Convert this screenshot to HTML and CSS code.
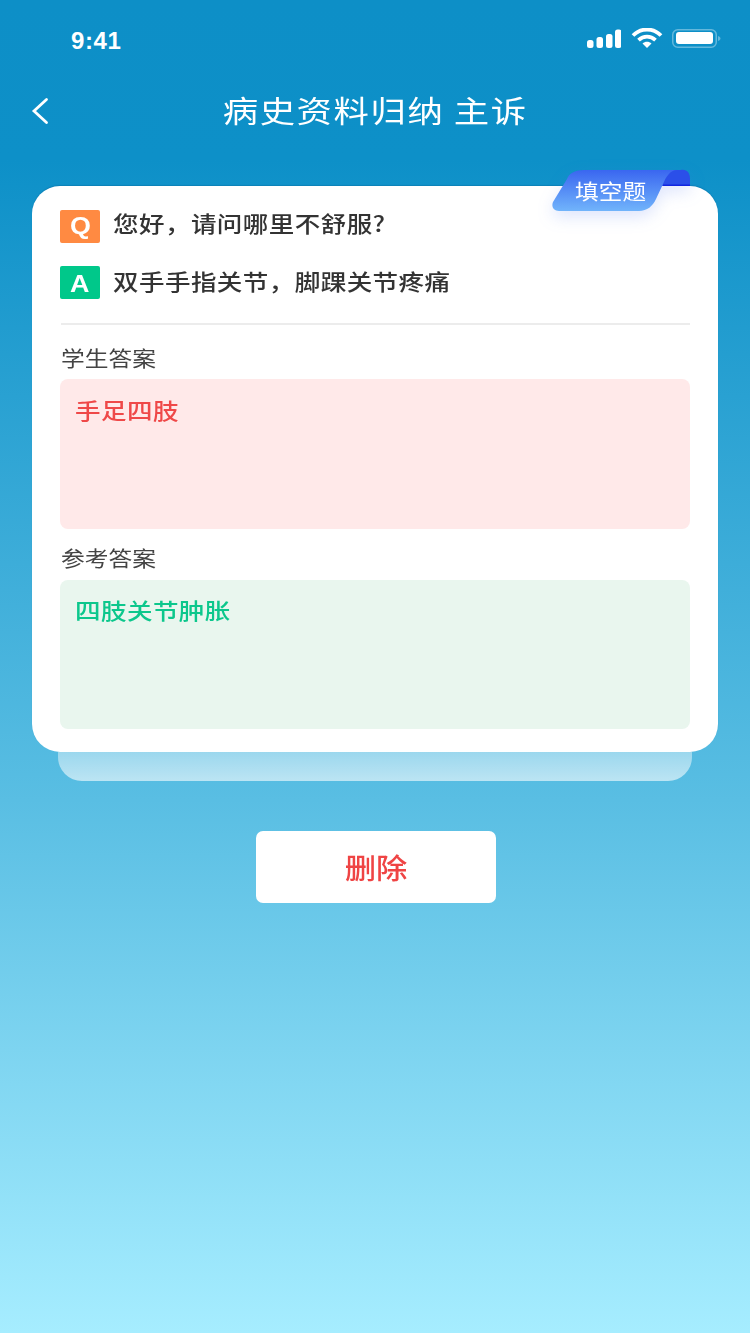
FILE: index.html
```html
<!DOCTYPE html>
<html lang="zh-CN">
<head>
<meta charset="utf-8">
<title>病史资料归纳 主诉</title>
<link rel="stylesheet" href="styles.css">
</head>
<body>
<div class="page">
  <div class="status">
    <span class="time">9:41</span>
    <div class="status-icons">
      <svg class="ic-signal" width="34.500" height="19" viewBox="0 0 34.500 19"><rect x="0" y="11" width="6.500" height="8" rx="2.500"/><rect x="9.500" y="8" width="6.500" height="11" rx="2.500"/><rect x="19" y="5" width="6.500" height="14" rx="2.500"/><rect x="28" y="0.500" width="6.500" height="18.500" rx="2.500"/></svg>
      <svg class="ic-wifi" width="32" height="20" viewBox="0 0 32 20"><path d="M2 7.500C10 -0.500 22 -0.500 30 7.500" /><path d="M7.500 12.200C12.500 7.500 19.500 7.500 24.500 12.200"/><path class="wifi-dot" d="M11.500 15.500C14 13.300 18 13.300 20.500 15.500L16 20Z"/></svg>
      <svg class="ic-batt" width="49" height="19" viewBox="0 0 49 19"><rect class="batt-shell" x="0.750" y="0.750" width="43.500" height="17.500" rx="5"/><rect class="batt-fill" x="4" y="3" width="37" height="12" rx="3"/><path class="batt-tip" d="M46 7c1.500 .4 2.500 1.300 2.500 2.500s-1 2.100-2.500 2.500z"/></svg>
    </div>
  </div>
  <header class="nav">
    <svg class="back" width="20" height="28" viewBox="0 0 20 28"><path d="M16.500 2.500 L4 14 L16.500 25.500"/></svg>
    <h1 class="title">病史资料归纳 主诉</h1>
  </header>
  <main class="main">
    <section class="card">
      <div class="tag">
        <svg class="tag-bg" width="142" height="44" viewBox="0 0 142 44">
          <defs><linearGradient id="tagGrad" x1="0" y1="0" x2="0" y2="1"><stop offset="0" stop-color="#3a66f0"/><stop offset="1" stop-color="#71b4fb"/></linearGradient></defs>
          <path d="M110 17V1H130C136 0 139 4 139 10V17Z" fill="#2b4fe9"/>
          <rect x="112" y="15.500" width="27" height="1.500" fill="#1226e0"/>
          <path d="M16 10C18 4 25 1 33 1H126C119 1 115 8 112 15L105 30C102 37 96 42 88 42H8C3 42 0 38 2 33Z" fill="url(#tagGrad)"/>
        </svg>
        <span class="tag-text">填空题</span>
      </div>
      <div class="qa qa-q"><span class="badge badge-q"><span class="badge-letter">Q</span></span><span class="qa-text">您好，请问哪里不舒服?</span></div>
      <div class="qa qa-a"><span class="badge badge-a"><span class="badge-letter">A</span></span><span class="qa-text">双手手指关节，脚踝关节疼痛</span></div>
      <div class="divider"></div>
      <div class="label label-first"><span class="label-text">学生答案</span></div>
      <div class="box box-red"><span class="box-text">手足四肢</span></div>
      <div class="label"><span class="label-text">参考答案</span></div>
      <div class="box box-green"><span class="box-text">四肢关节肿胀</span></div>
    </section>
    <div class="under"></div>
    <button class="delete" type="button"><span class="delete-text">删除</span></button>
  </main>
</div>
</body>
</html>
```
FILE: styles.css
```css
* { box-sizing: border-box; }
html, body { margin: 0; padding: 0; }
body { font-family: "Noto Sans CJK SC", "Liberation Sans", sans-serif; }
.page {
  width: 750px;
  height: 1333px;
  overflow: hidden;
  background: linear-gradient(180deg, #0d8fc7 0%, #0d90c8 12%, #59bee3 60%, #a6edff 100%);
}
.status {
  height: 72px;
  padding: 27px 29px 0 71px;
  display: flex;
  justify-content: space-between;
  align-items: flex-start;
}
.time {
  font-family: "Liberation Sans", sans-serif;
  font-weight: 700;
  font-size: 24px;
  line-height: 27px;
  letter-spacing: 0.6px;
  color: #fff;
}
.status-icons { display: flex; align-items: flex-start; padding-top: 1px; }
.ic-signal { fill: #fff; margin-top: 1px; margin-right: 10px; }
.ic-wifi { fill: none; margin-right: 9px; }
.ic-wifi path { stroke: #fff; stroke-width: 3.8px; }
.ic-wifi .wifi-dot { fill: #fff; stroke: none; }
.ic-batt { margin-top: 1px; }
.batt-shell { fill: none; stroke: #64b8dc; stroke-width: 1.5px; }
.batt-fill { fill: #fff; }
.batt-tip { fill: #64b8dc; }
.nav {
  height: 78px;
  position: relative;
  display: flex;
  align-items: center;
  justify-content: center;
}
.back {
  position: absolute;
  left: 30px;
  top: 25px;
  fill: none;
  stroke: #fff;
  stroke-width: 2.800px;
  stroke-linecap: round;
}
.title {
  margin: 0 0 4px;
  font-size: 30px;
  font-weight: 400;
  line-height: 40px;
  letter-spacing: 1.3px;
  color: #fff;
  white-space: pre;
  transform: scaleX(1.18);
}
.main { padding: 36px 32px 0; display: flex; flex-direction: column; align-items: center; }
.card {
  position: relative;
  width: 686px;
  height: 566px;
  background: #fff;
  border-radius: 28px;
  padding: 24px 28px 23px;
  box-shadow: 0 -1px 1px rgba(0, 80, 130, 0.25);
}
.tag {
  position: absolute;
  left: 519px;
  top: -17px;
  width: 142px;
  height: 44px;
  filter: drop-shadow(0 6px 8px rgba(70, 110, 240, 0.18));
}
.tag-bg { position: absolute; left: 0; top: 0; }
.tag-text {
  position: absolute;
  left: 24px;
  top: 6px;
  font-size: 21px;
  line-height: 30px;
  color: #fff;
  white-space: nowrap;
  transform: scaleX(1.13);
  transform-origin: left center;
}
.qa { display: flex; align-items: center; height: 33px; }
.qa-a { margin-top: 23px; }
.badge {
  width: 40px;
  height: 33px;
  border-radius: 2px;
  text-align: center;
  margin-right: 13px;
  flex: none;
}
.badge-letter {
  display: inline-block;
  color: #fff;
  font-family: "Liberation Sans", sans-serif;
  font-weight: 700;
  font-size: 24px;
  line-height: 31px;
  transform: scaleX(1.12);
}
.badge-a .badge-letter { line-height: 35px; }
.badge-q { background: #ff8a42; }
.badge-a { background: #00c88a; }
.qa-text {
  font-size: 22px;
  font-weight: 500;
  line-height: 33px;
  letter-spacing: 0.38px;
  color: #333;
  white-space: nowrap;
  margin-bottom: 5px;
  transform: scaleX(1.16);
  transform-origin: left center;
}
.qa-q .qa-text { margin-bottom: 9px; }
.divider { height: 2px; margin: 24px 0 0 1px; background: #ececec; }
.label {
  height: 51px;
  padding: 12px 0 0;
  font-size: 21px;
  line-height: 32px;
  color: #444;
}
.label-first { height: 54px; padding-top: 16px; }
.label-text {
  display: inline-block;
  margin-left: 1px;
  transform: scaleX(1.13);
  transform-origin: left center;
}
.box {
  height: 150px;
  border-radius: 8px;
  padding: 12px 15px;
  font-size: 22px;
  font-weight: 500;
  line-height: 36px;
}
.box-text {
  display: inline-block;
  letter-spacing: 0.38px;
  transform: scaleX(1.16);
  transform-origin: left center;
}
.box-red { background: #ffe9e9; color: #ef4848; }
.box-green { background: #e9f6ee; color: #0cc78c; height: 149px; padding-top: 11px; }
.under {
  width: 634px;
  height: 29px;
  border-radius: 0 0 24px 24px;
  background: linear-gradient(180deg, rgba(255,255,255,0.42), rgba(255,255,255,0.6));
}
.delete {
  margin: 50px 0 0 2px;
  width: 240px;
  height: 72px;
  border: 0;
  border-radius: 7px;
  background: #fff;
  color: #ef4444;
  font-family: inherit;
  font-size: 28px;
  font-weight: 500;
}
.delete-text { display: inline-block; transform: scaleX(1.12); }
```
